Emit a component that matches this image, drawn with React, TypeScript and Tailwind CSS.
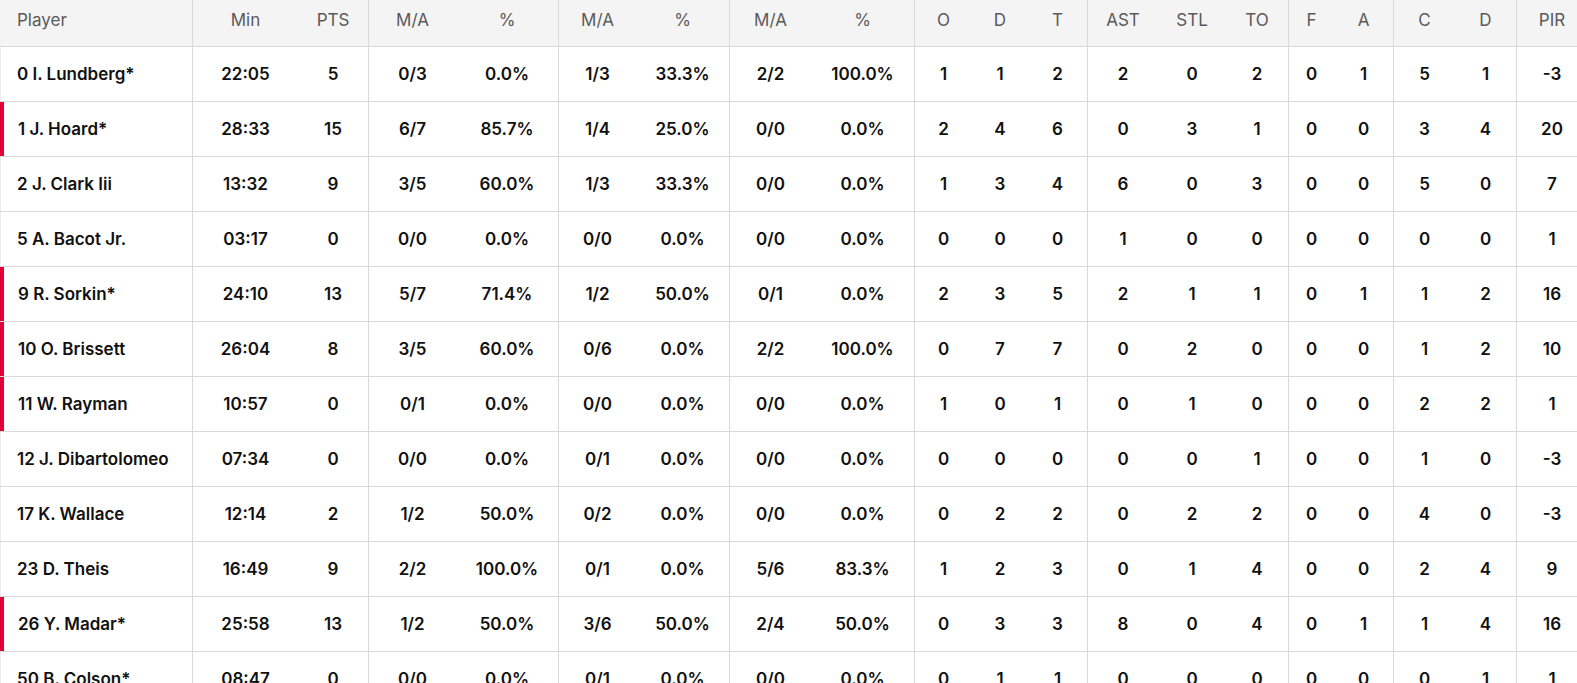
import React from "react";

type Row = {
  name: string;
  court?: boolean;
  min: string;
  pts: number;
  fg: [string, string];
  tp: [string, string];
  ft: [string, string];
  reb: [number, number, number];
  misc: [number, number, number];
  blk: [number, number];
  fouls: [number, number];
  pir: number;
};

const rows: Row[] = [
  { name: "0 I. Lundberg*", min: "22:05", pts: 5, fg: ["0/3", "0.0%"], tp: ["1/3", "33.3%"], ft: ["2/2", "100.0%"], reb: [1, 1, 2], misc: [2, 0, 2], blk: [0, 1], fouls: [5, 1], pir: -3 },
  { name: "1 J. Hoard*", court: true, min: "28:33", pts: 15, fg: ["6/7", "85.7%"], tp: ["1/4", "25.0%"], ft: ["0/0", "0.0%"], reb: [2, 4, 6], misc: [0, 3, 1], blk: [0, 0], fouls: [3, 4], pir: 20 },
  { name: "2 J. Clark Iii", min: "13:32", pts: 9, fg: ["3/5", "60.0%"], tp: ["1/3", "33.3%"], ft: ["0/0", "0.0%"], reb: [1, 3, 4], misc: [6, 0, 3], blk: [0, 0], fouls: [5, 0], pir: 7 },
  { name: "5 A. Bacot Jr.", min: "03:17", pts: 0, fg: ["0/0", "0.0%"], tp: ["0/0", "0.0%"], ft: ["0/0", "0.0%"], reb: [0, 0, 0], misc: [1, 0, 0], blk: [0, 0], fouls: [0, 0], pir: 1 },
  { name: "9 R. Sorkin*", court: true, min: "24:10", pts: 13, fg: ["5/7", "71.4%"], tp: ["1/2", "50.0%"], ft: ["0/1", "0.0%"], reb: [2, 3, 5], misc: [2, 1, 1], blk: [0, 1], fouls: [1, 2], pir: 16 },
  { name: "10 O. Brissett", court: true, min: "26:04", pts: 8, fg: ["3/5", "60.0%"], tp: ["0/6", "0.0%"], ft: ["2/2", "100.0%"], reb: [0, 7, 7], misc: [0, 2, 0], blk: [0, 0], fouls: [1, 2], pir: 10 },
  { name: "11 W. Rayman", court: true, min: "10:57", pts: 0, fg: ["0/1", "0.0%"], tp: ["0/0", "0.0%"], ft: ["0/0", "0.0%"], reb: [1, 0, 1], misc: [0, 1, 0], blk: [0, 0], fouls: [2, 2], pir: 1 },
  { name: "12 J. Dibartolomeo", min: "07:34", pts: 0, fg: ["0/0", "0.0%"], tp: ["0/1", "0.0%"], ft: ["0/0", "0.0%"], reb: [0, 0, 0], misc: [0, 0, 1], blk: [0, 0], fouls: [1, 0], pir: -3 },
  { name: "17 K. Wallace", min: "12:14", pts: 2, fg: ["1/2", "50.0%"], tp: ["0/2", "0.0%"], ft: ["0/0", "0.0%"], reb: [0, 2, 2], misc: [0, 2, 2], blk: [0, 0], fouls: [4, 0], pir: -3 },
  { name: "23 D. Theis", min: "16:49", pts: 9, fg: ["2/2", "100.0%"], tp: ["0/1", "0.0%"], ft: ["5/6", "83.3%"], reb: [1, 2, 3], misc: [0, 1, 4], blk: [0, 0], fouls: [2, 4], pir: 9 },
  { name: "26 Y. Madar*", court: true, min: "25:58", pts: 13, fg: ["1/2", "50.0%"], tp: ["3/6", "50.0%"], ft: ["2/4", "50.0%"], reb: [0, 3, 3], misc: [8, 0, 4], blk: [0, 1], fouls: [1, 4], pir: 16 },
  { name: "50 B. Colson*", min: "08:47", pts: 0, fg: ["0/0", "0.0%"], tp: ["0/1", "0.0%"], ft: ["0/0", "0.0%"], reb: [0, 1, 1], misc: [0, 0, 0], blk: [0, 0], fouls: [0, 1], pir: 1 },
];

const headers = ["Min", "PTS", "M/A", "%", "M/A", "%", "M/A", "%", "O", "D", "T", "AST", "STL", "TO", "F", "A", "C", "D", "PIR"];

// columns that close a group and carry the divider
const groupEnd = new Set([1, 3, 5, 7, 10, 13, 15, 17]);

const grid =
  "grid grid-cols-[193px_105px_71px_87px_103px_77px_94px_81px_104px_57px_56px_60px_70px_68px_63px_45px_60px_61px_62px_70px]";

const Cell: React.FC<{ i: number; children: React.ReactNode }> = ({ i, children }) => (
  <div
    className={`flex items-center justify-center whitespace-nowrap ${groupEnd.has(i) ? "border-r border-[#d9d9d9]" : ""}`}
  >
    {children}
  </div>
);

export default function App() {
  return (
    <div
      className="w-[1577px] h-[683px] overflow-hidden bg-white"
      style={{ fontFamily: "Inter, 'Liberation Sans', sans-serif" }}
    >
      <div className="w-[1587px]">
        <div className={`${grid} h-[47px] bg-[#f4f4f4] border-b border-[#d9d9d9] text-[17px] text-[#5a5a5a]`}>
          <div className="flex items-center pl-[17px] border-r border-[#d9d9d9]">
            <span className="mb-[4px]">Player</span>
          </div>
          {headers.map((h, i) => (
            <Cell key={i} i={i}>
              <span className="mb-[4px]">{h}</span>
            </Cell>
          ))}
        </div>

        {rows.map((r) => {
          const vals = [
            r.min,
            r.pts,
            ...r.fg,
            ...r.tp,
            ...r.ft,
            ...r.reb,
            ...r.misc,
            ...r.blk,
            ...r.fouls,
            r.pir,
          ];
          return (
            <div
              key={r.name}
              className={`${grid} h-[55px] border-b border-[#d9d9d9] text-[17px] font-semibold text-[#111]`}
            >
              <div
                className={`flex items-center pt-[2px] whitespace-nowrap border-r border-[#d9d9d9] ${
                  r.court ? "border-l-4 border-l-[#e2003b] pl-[14px]" : "border-l border-l-[#ececec] pl-[16px]"
                }`}
              >
                {r.name}
              </div>
              {vals.map((v, i) => (
                <Cell key={i} i={i}>
                  <span className="pt-[2px]">{v}</span>
                </Cell>
              ))}
            </div>
          );
        })}
      </div>
    </div>
  );
}
